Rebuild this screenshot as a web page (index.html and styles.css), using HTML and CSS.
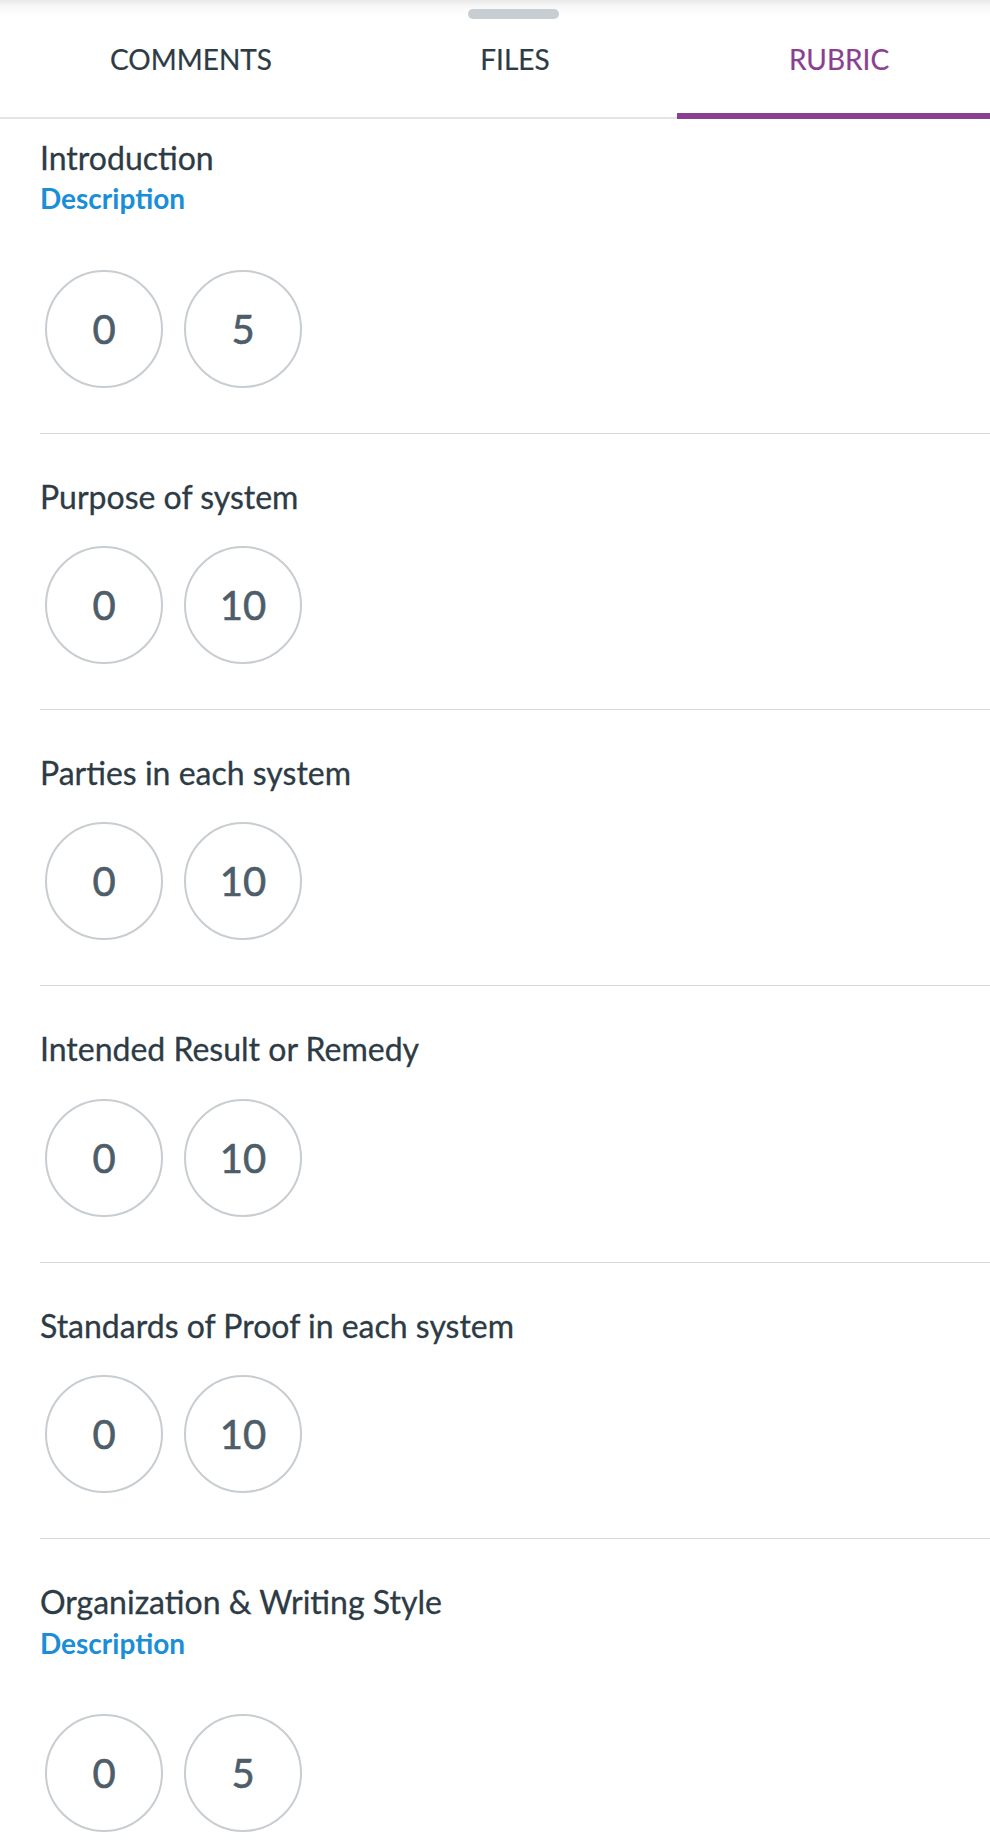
FILE: index.html
```html
<!DOCTYPE html>
<html lang="en">
<head>
<meta charset="utf-8">
<title>Rubric</title>
<link rel="stylesheet" href="styles.css">
</head>
<body>
<header class="sheet-header">
  <div class="handle"></div>
  <nav class="tabs">
    <div class="tab">COMMENTS</div>
    <div class="tab">FILES</div>
    <div class="tab active">RUBRIC</div>
  </nav>
</header>
<main class="rubric">
  <section class="criterion first">
    <h2 class="title">Introduction</h2>
    <a class="desc">Description</a>
    <div class="ratings with-desc">
      <button class="rating">0</button>
      <button class="rating">5</button>
    </div>
  </section>
  <section class="criterion">
    <h2 class="title">Purpose of system</h2>
    <div class="ratings">
      <button class="rating">0</button>
      <button class="rating">10</button>
    </div>
  </section>
  <section class="criterion">
    <h2 class="title">Parties in each system</h2>
    <div class="ratings">
      <button class="rating">0</button>
      <button class="rating">10</button>
    </div>
  </section>
  <section class="criterion">
    <h2 class="title">Intended Result or Remedy</h2>
    <div class="ratings">
      <button class="rating">0</button>
      <button class="rating">10</button>
    </div>
  </section>
  <section class="criterion">
    <h2 class="title">Standards of Proof in each system</h2>
    <div class="ratings">
      <button class="rating">0</button>
      <button class="rating">10</button>
    </div>
  </section>
  <section class="criterion last">
    <h2 class="title">Organization &amp; Writing Style</h2>
    <a class="desc">Description</a>
    <div class="ratings with-desc">
      <button class="rating">0</button>
      <button class="rating">5</button>
    </div>
  </section>
</main>
</body>
</html>
```
FILE: styles.css
```css
html, body {
  margin: 0;
  padding: 0;
  background: #ffffff;
  overflow-x: hidden;
}
body {
  font-family: Lato, "Open Sans", sans-serif;
  color: #2d3b45;
  width: 990px;
}
.sheet-header {
  background: linear-gradient(#e9e9e9 0, #f7f7f7 6px, #ffffff 16px);
  padding-top: 9px;
  overflow: hidden;
}
.handle {
  width: 91px;
  height: 10px;
  border-radius: 5px;
  background: #c7cdd1;
  margin-left: 468px;
}
.tabs {
  display: grid;
  grid-template-columns: repeat(3, 324px);
  padding-left: 29px;
  margin-top: 24px;
  box-shadow: inset 0 -2px 0 #e2e4e6;
  width: 1100px;
}
.tab {
  font-size: 28px;
  line-height: 1.2;
  text-align: center;
  color: #2d3b45;
  padding-bottom: 36px;
  border-bottom: 6px solid transparent;
  -webkit-text-stroke: 0.2px #2d3b45;
}
.tab.active {
  color: #8b3f91;
  border-bottom-color: #8b3f91;
  -webkit-text-stroke: 0.2px #8b3f91;
}
.rubric {
  padding-left: 40px;
}
.criterion {
  padding: 44px 0 45px;
  border-bottom: 1px solid #d6dadd;
}
.criterion.first {
  padding-top: 20px;
}
.criterion.last {
  border-bottom: none;
  padding-bottom: 20px;
}
.title {
  margin: 0;
  font-size: 32px;
  font-weight: 400;
  line-height: 1.2;
  color: #2d3b45;
  -webkit-text-stroke: 0.3px #2d3b45;
}
.desc {
  display: block;
  margin-top: 5px;
  font-size: 28px;
  font-weight: 700;
  line-height: 1.2;
  color: #1a8ed6;
}
.ratings {
  display: flex;
  gap: 21px;
  margin-top: 30px;
  padding-left: 5px;
}
.ratings.with-desc {
  margin-top: 54px;
}
.rating {
  width: 118px;
  height: 118px;
  border-radius: 50%;
  border: 2px solid #c8cdd1;
  background: #ffffff;
  font-family: Lato, "Open Sans", sans-serif;
  font-size: 40px;
  color: #4d5d69;
  -webkit-text-stroke: 0.6px #4d5d69;
  display: flex;
  align-items: center;
  justify-content: center;
  padding: 0;
}
```
